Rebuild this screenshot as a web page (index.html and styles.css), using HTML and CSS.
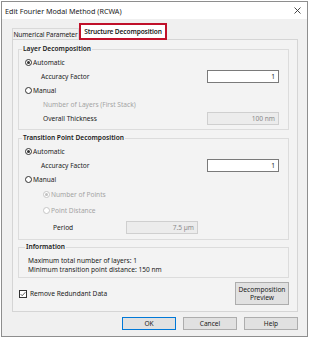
FILE: index.html
```html
<!DOCTYPE html>
<html lang="en">

<head>
    <meta charset="UTF-8">
    <title>Edit Fourier Modal Method (RCWA)</title>
    <link rel="stylesheet" href="styles.css">
</head>

<body>
    <div class="dialog">
        <div class="titlebar">
            <span class="title">Edit Fourier Modal Method (RCWA)</span>
            <svg class="close" width="7" height="7" viewBox="0 0 7 7">
                <path d="M0.5 0.5 L6.5 6.5 M6.5 0.5 L0.5 6.5" stroke="#333" stroke-width="0.9" />
            </svg>
        </div>

        <div class="content">
            <div class="tabs">
                <div class="tab">Numerical Parameter</div>
                <div class="tab active">Structure Decomposition</div>
            </div>

            <div class="tab-page">
                <!-- layer decomposition -->
                <fieldset class="group layer">
                    <legend>Layer Decomposition</legend>
                    <div class="row"><span class="radio checked"></span>Automatic</div>
                    <div class="row field">
                        <span class="label first">Accuracy Factor</span>
                        <span class="input">1</span>
                    </div>
                    <div class="row"><span class="radio"></span>Manual</div>
                    <div class="row field">
                        <span class="label muted">Number of Layers (First Stack)</span>
                    </div>
                    <div class="row field">
                        <span class="label">Overall Thickness</span>
                        <span class="input disabled">100 nm</span>
                    </div>
                </fieldset>

                <!-- transition point decomposition -->
                <fieldset class="group transition">
                    <legend>Transition Point Decomposition</legend>
                    <div class="row"><span class="radio checked"></span>Automatic</div>
                    <div class="row field">
                        <span class="label first">Accuracy Factor</span>
                        <span class="input">1</span>
                    </div>
                    <div class="row"><span class="radio"></span>Manual</div>
                    <div class="row sub tall muted"><span class="radio checked disabled"></span>Number of Points</div>
                    <div class="row sub tall muted"><span class="radio disabled"></span>Point Distance</div>
                    <div class="row period">
                        <span class="label period-label">Period</span>
                        <span class="input disabled">7.5 µm</span>
                    </div>
                </fieldset>

                <!-- information -->
                <fieldset class="group info">
                    <legend>Information</legend>
                    <p>Maximum total number of layers: 1</p>
                    <p>Minimum transition point distance: 150 nm</p>
                </fieldset>

                <div class="options">
                    <label class="check">
                        <svg class="checkbox" width="8" height="8" viewBox="0 0 8 8">
                            <rect x="0.5" y="0.5" width="7" height="7" fill="#fff" stroke="#333" />
                            <path d="M1.6 4.1 L3.2 5.7 L6.4 2.2" fill="none" stroke="#333" stroke-width="0.8" />
                        </svg>
                        Remove Redundant Data
                    </label>
                    <button class="btn preview">Decomposition<br>Preview</button>
                </div>
            </div>

            <div class="buttons">
                <button class="btn default">OK</button>
                <button class="btn">Cancel</button>
                <button class="btn">Help</button>
            </div>
        </div>
    </div>
</body>

</html>
```

FILE: styles.css
```css
*,
::before,
::after {
    margin: 0;
    padding: 0;
    box-sizing: border-box;
}

html,
body {
    font-family: 'Noto Sans', 'Open Sans', sans-serif;
    font-size: 6.6px;
    color: #1a1a1a;
    background-color: #fff;
}

.dialog {
    width: 307px;
    height: 336px;
    margin: 1px 0 0 1px;
    display: flex;
    flex-direction: column;
    border: 1px solid #8e8e8e;
    background-color: #f0f0f0;
}

.titlebar {
    height: 17px;
    padding: 0 6px 0 3px;
    display: flex;
    align-items: center;
    justify-content: space-between;
    font-size: 7.2px;
    background-color: #fff;
}

.content {
    padding: 4px 9px 0 10px;
}

/* tabs */
.tabs {
    height: 16px;
    display: flex;
    align-items: flex-end;
}

.tab {
    width: 67px;
    height: 11px;
    display: flex;
    align-items: center;
    justify-content: center;
    white-space: nowrap;
    letter-spacing: -0.12px;
    border: 1px solid #d9d9d9;
    border-bottom: none;
    background-color: #f0f0f0;
}

.tab.active {
    width: 88px;
    height: 17px;
    margin-bottom: -1px;
    position: relative;
    font-weight: 600;
    border: 2px solid #c0102a;
    background-color: #fff;
}

.tab-page {
    height: 273px;
    padding: 4px 8px 0 5px;
    border: 1px solid #d5d5d5;
    background-color: #f3f3f3;
}

/* group boxes */
.group {
    padding: 1px 9px 4px 6px;
    border: 1px solid #dcdcdc;
}

.group legend {
    height: 10px;
    line-height: 10px;
    margin-left: -3px;
    padding: 0 1px;
    font-weight: 600;
}

.group.transition {
    margin-top: 3px;
    padding-bottom: 3px;
}

.group.info {
    margin-top: 2px;
    padding: 4px 9px 3px 9px;
}

.group.info p {
    height: 9px;
    line-height: 9px;
}

.row {
    height: 14px;
    display: flex;
    align-items: center;
    white-space: nowrap;
}

.row.tall {
    height: 16px;
}

.row.period {
    height: 18px;
}

.row.sub {
    padding-left: 18px;
}

.label {
    flex: 1;
    padding-left: 18px;
}

.label.first {
    padding-left: 16px;
}

.label.period-label {
    flex: none;
    width: 101px;
    padding-left: 28px;
}

.muted {
    color: #a3a3a3;
}

.input {
    width: 72px;
    height: 13px;
    padding-right: 3px;
    line-height: 11px;
    text-align: right;
    border: 1px solid #7a7a7a;
    background-color: #fff;
}

.input.disabled {
    color: #8a8a8a;
    border-color: #cfcfcf;
    background-color: #ececec;
}

.radio {
    width: 7px;
    height: 7px;
    margin-right: 1px;
    display: flex;
    align-items: center;
    justify-content: center;
    border: 1px solid #333;
    border-radius: 50%;
    background-color: #fff;
}

.radio.checked::after {
    content: '';
    width: 3px;
    height: 3px;
    border-radius: 50%;
    background-color: #333;
}

.radio.disabled {
    border-color: #c6c6c6;
}

.radio.disabled.checked::after {
    background-color: #c0c0c0;
}

/* bottom of tab page */
.options {
    height: 23px;
    margin-top: 4px;
    padding-left: 1px;
    display: flex;
    align-items: center;
    justify-content: space-between;
}

.check {
    display: flex;
    align-items: center;
    gap: 3px;
}

.btn {
    width: 54px;
    height: 13px;
    font-family: inherit;
    font-size: inherit;
    color: #1a1a1a;
    border: 1px solid #adadad;
    background-color: #e1e1e1;
}

.btn.preview {
    height: 23px;
    line-height: 8px;
}

.btn.default {
    border-color: #0078d7;
}

.buttons {
    margin-top: 5px;
    display: flex;
    justify-content: flex-end;
    gap: 7px;
}
```
